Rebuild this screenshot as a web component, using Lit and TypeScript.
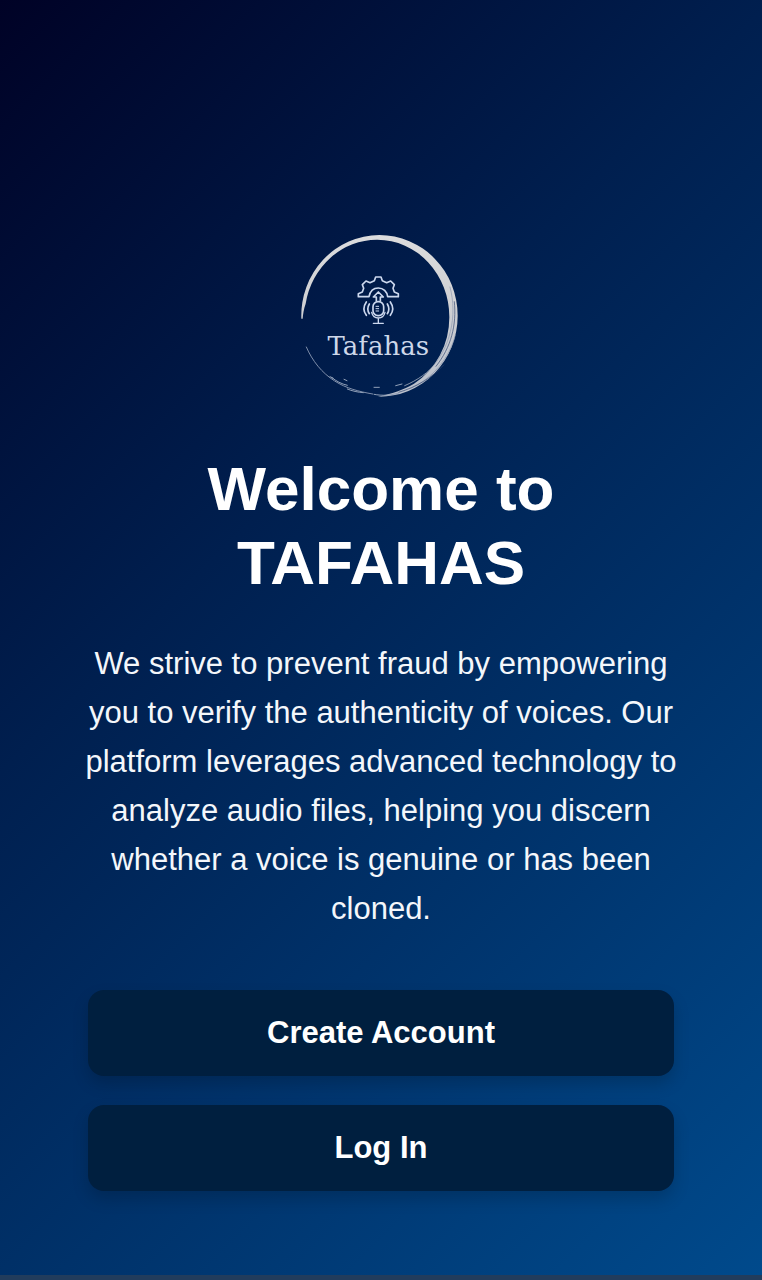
import { LitElement, html, css } from "lit";
import { customElement } from "lit/decorators.js";

@customElement("tafahas-logo")
class TafahasLogo extends LitElement {
  static styles = css`
    :host {
      display: block;
    }
    .logo {
      display: block;
      width: 180px;
      height: 180px;
    }
    .wordmark {
      font-family: "DejaVu Serif", "Liberation Serif", serif;
      font-size: 78px;
      fill: #cdd7e9;
    }
  `;

  render() {
    return html`
      <svg class="logo" viewBox="3 0 540 540" role="img" aria-label="Tafahas logo">
        <defs>
          <linearGradient id="ring" x1="0" y1="0" x2="0" y2="1">
            <stop offset="0" stop-color="#dcdcdd" />
            <stop offset="0.45" stop-color="#cfd0d3" />
            <stop offset="1" stop-color="#b9bfcb" />
          </linearGradient>
        </defs>

        <!-- brush ring -->
        <path
          fill="url(#ring)"
          d="M34 281A235 242 0 0 1 268 30A235 242 0 0 1 503 272A235 242 0 0 1 264 515C306 506 340 495 372 476A217 232 0 0 0 478 276A217 232 0 0 0 262 44A217 232 0 0 0 47 236C41 252 39 268 38 281Z"
        />
        <g fill="none" stroke-linecap="round">
          <path stroke="#8995ad" stroke-width="2" d="M480 186C503 272 482 372 416 438M496 330C478 400 428 460 362 490" />
          <path stroke="#30466f" stroke-width="2" d="M493 230C500 300 484 366 438 424M461 420C426 458 380 486 326 502" />
          <path stroke="#c5cad5" stroke-width="2" d="M440 414C416 442 382 466 344 482" />
          <path stroke="#7f8eaa" stroke-width="3" d="M49 366C67 408 96 444 134 468C168 490 208 500 248 507" />
          <path stroke="#91a0b8" stroke-width="3" d="M126 458C138 468 154 477 172 481M172 492C186 498 204 502 220 503M252 487H268M252 508C276 513 304 511 326 504M317 482L336 477M120 455L130 460M162 463L171 467" />
        </g>

        <!-- gear, arrow and microphone -->
        <g fill="none" stroke="#ccd8ee" stroke-width="5" stroke-linejoin="round" stroke-linecap="round">
          <path d="M205 215V206L217 201L221 190L217 179L228 168L240 173L253 167L257 156H273L277 167L290 173L302 168L313 179L309 190L313 201L325 206V215H293C291 200 280 189 265 189C250 189 240 200 237 215Z" />
          <path d="M259 228V216H250L265 201L280 216H271V228" />
          <rect x="249" y="230" width="32" height="42" rx="15" />
          <path d="M258 244H266M258 251H266M258 258H266" stroke-width="3" />
          <path d="M245 262C248 274 255 279 265 279C275 279 282 274 285 262M265 279V295M250 295H280" stroke-width="4" />
          <path d="M238 237C232 247 232 257 238 266M229 231C220 244 220 259 229 271M292 237C298 247 298 257 292 266M301 231C310 244 310 259 301 271" />
        </g>
        <text class="wordmark" x="265" y="389" text-anchor="middle">Tafahas</text>
      </svg>
    `;
  }
}

@customElement("app-root")
class AppRoot extends LitElement {
  static styles = css`
    :host {
      display: flex;
      flex-direction: column;
      min-height: 100vh;
      color: #ffffff;
      font-family: "Liberation Sans", Arial, sans-serif;
    }
    .welcome {
      box-sizing: border-box;
      flex: 1;
      display: flex;
      flex-direction: column;
      align-items: center;
      justify-content: flex-end;
      padding: 40px 80px 84px;
      text-align: center;
      background: linear-gradient(135deg, #000226, #001f4f 38%, #004a8c);
    }
    .title {
      max-width: 440px;
      margin: 47px 0 0;
      font-size: 62px;
      line-height: 74px;
      font-weight: 700;
    }
    .intro {
      max-width: 602px;
      margin: 39px 0 0;
      font-size: 31px;
      line-height: 49px;
      color: #f4f7fb;
    }
    .actions {
      box-sizing: border-box;
      display: flex;
      flex-direction: column;
      gap: 29px;
      width: 100%;
      padding: 0 8px;
      margin-top: 57px;
    }
    .action {
      width: 100%;
      padding: 25px 16px;
      border: 0;
      border-radius: 16px;
      background: #001f3f;
      color: #ffffff;
      font-family: inherit;
      font-size: 31px;
      line-height: 36px;
      font-weight: 700;
      box-shadow: 0 8px 16px rgba(0, 0, 0, 0.17);
      cursor: pointer;
    }
    .edge {
      height: 5px;
      background: #213c5c;
    }
  `;

  render() {
    return html`
      <main class="welcome">
        <tafahas-logo></tafahas-logo>
        <h1 class="title">Welcome to TAFAHAS</h1>
        <p class="intro">
          We strive to prevent fraud by empowering you to verify the authenticity of voices. Our
          platform leverages advanced technology to analyze audio files, helping you discern whether
          a voice is genuine or has been cloned.
        </p>
        <div class="actions">
          <button class="action" type="button">Create Account</button>
          <button class="action" type="button">Log In</button>
        </div>
      </main>
      <div class="edge"></div>
    `;
  }
}
